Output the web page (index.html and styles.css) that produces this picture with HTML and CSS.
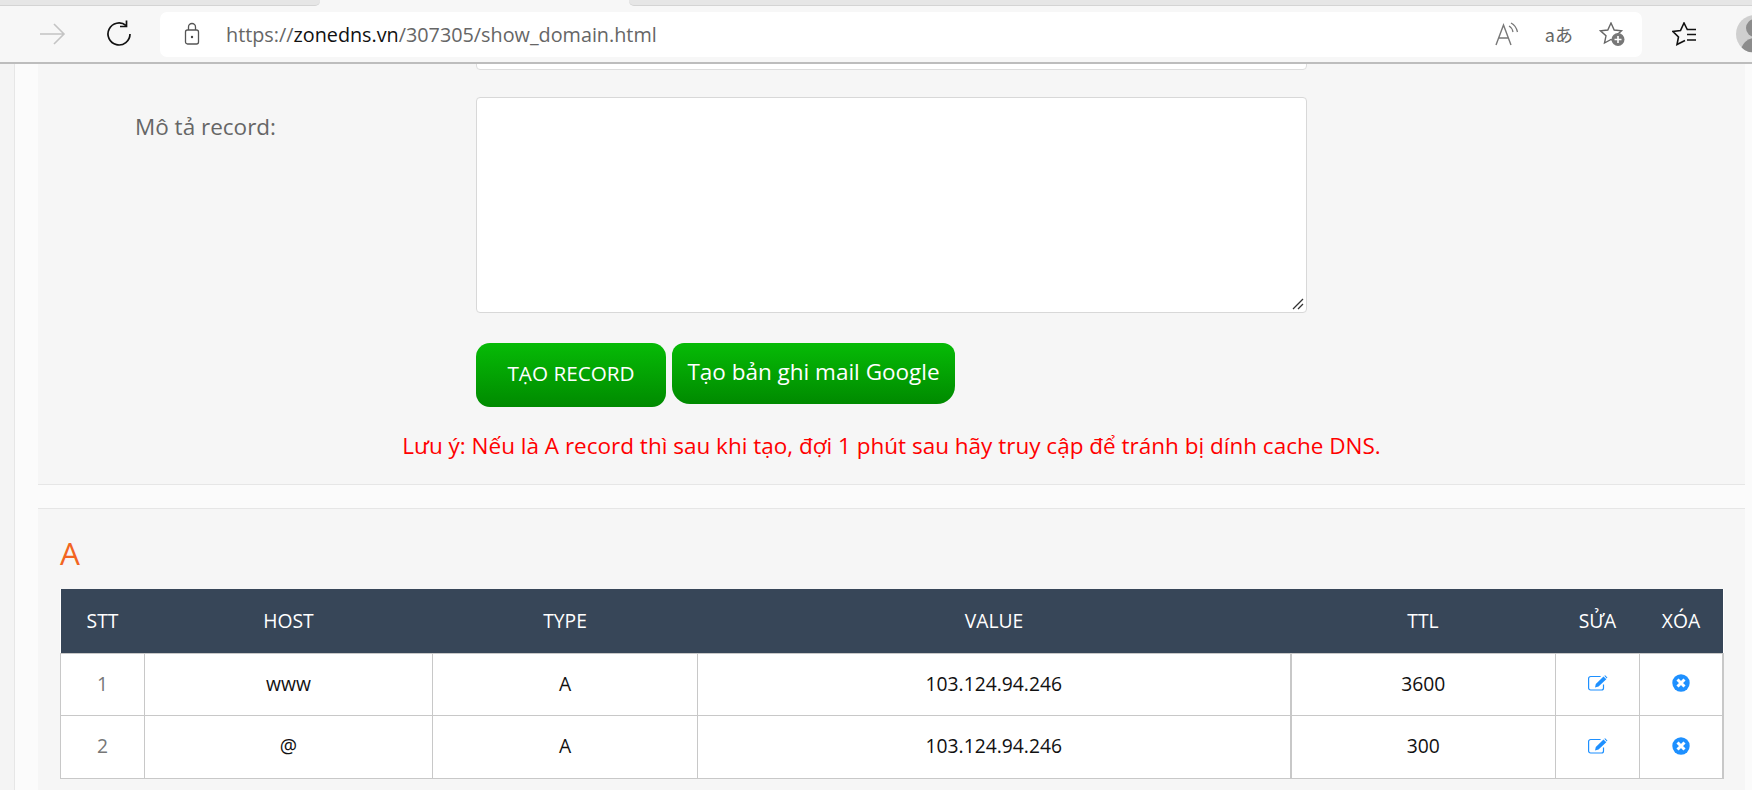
FILE: index.html
```html
<!DOCTYPE html>
<html lang="en">
<head>
    <meta charset="UTF-8">
    <meta name="viewport" content="width=device-width, initial-scale=1.0">
    <title>Show domain</title>
    <link rel="stylesheet" href="styles.css">
</head>
<body>
    <div class="tabstrip">
        <div class="tab-left"></div>
        <div class="tab-active"></div>
        <div class="tab-right"></div>
    </div>
    <header class="toolbar">
        <svg class="nav-icon forward" viewBox="0 0 28 28"><path d="M2 14h24M16 4l10 10-10 10" fill="none" stroke="#c4c4c4" stroke-width="1.6"/></svg>
        <svg class="nav-icon reload" viewBox="0 0 28 28"><path d="M21 5.500A11 11 0 1 0 25 14" fill="none" stroke="#111" stroke-width="1.7"/><path d="M21.500 .5v6h-6.500" fill="none" stroke="#111" stroke-width="1.7"/></svg>
        <div class="addressbar">
            <svg class="lock" viewBox="0 0 16 24"><path d="M4.500 8V5a3.500 3.500 0 0 1 7 0v3" fill="none" stroke="#555" stroke-width="1.3"/><rect x="1.500" y="8" width="13" height="14" rx="2" fill="none" stroke="#555" stroke-width="1.3"/><circle cx="8" cy="15" r="1.2" fill="#444"/></svg>
            <span class="url">https://<b>zonedns.vn</b>/307305/show_domain.html</span>
            <div class="addr-actions">
                <svg class="read-icon" viewBox="0 0 24 24"><path d="M1 23L8.500 3l7.500 20M3.800 16h9.500" fill="none" stroke="#777" stroke-width="1.4"/><path d="M14 4q3 1.500 4 6M16 1q5 2.500 6.500 9" fill="none" stroke="#777" stroke-width="1.3"/></svg>
                <span class="translate">aあ</span>
                <svg class="addr-icon" viewBox="0 0 26 24"><path d="M12 1l3.200 7 7.300 .8-5.500 5 1.500 7.200L12 17.500 5.500 21 7 13.800l-5.500-5 7.300-.8z" fill="none" stroke="#666" stroke-width="1.4"/><circle cx="19" cy="17.500" r="6.500" fill="#777"/><path d="M19 14v7M15.500 17.500h7" stroke="#fff" stroke-width="1.6"/></svg>
            </div>
        </div>
        <svg class="fav-icon" viewBox="0 0 26 24"><path d="M15.500 8L12 1 8.500 8.500 1 9.500 6.500 15 5 22.500l8-4" fill="none" stroke="#111" stroke-width="1.6"/><path d="M15 7.500h9M15 12.500h9M15 18h9" stroke="#111" stroke-width="1.500"/></svg>
        <div class="avatar"><div class="avatar-head"></div><div class="avatar-body"></div></div>
    </header>

    <div class="page">
        <main class="content">
            <section class="panel form-panel">
                <div class="form-row cut-row">
                    <div class="form-label"></div>
                    <input class="form-input" type="text">
                </div>
                <div class="form-row">
                    <label class="form-label">Mô tả record:</label>
                    <div class="area-wrap">
                        <textarea class="form-area"></textarea>
                        <svg class="area-grip" viewBox="0 0 12 12"><path d="M1 11L11 1M6 11l5-5" fill="none" stroke="#333" stroke-width="1.300"/></svg>
                    </div>
                </div>
                <div class="form-buttons">
                    <button class="btn btn-create">TẠO RECORD</button>
                    <button class="btn btn-google">Tạo bản ghi mail Google</button>
                </div>
                <p class="note">Lưu ý: Nếu là A record thì sau khi tạo, đợi 1 phút sau hãy truy cập để tránh bị dính cache DNS.</p>
            </section>

            <section class="panel table-panel">
                <h3 class="record-type">A</h3>
                <table class="records">
                    <colgroup>
                        <col class="c-stt"><col class="c-host"><col class="c-type"><col class="c-value"><col class="c-ttl"><col class="c-edit"><col class="c-del">
                    </colgroup>
                    <thead>
                        <tr>
                            <th>STT</th>
                            <th>HOST</th>
                            <th>TYPE</th>
                            <th>VALUE</th>
                            <th>TTL</th>
                            <th>SỬA</th>
                            <th>XÓA</th>
                        </tr>
                    </thead>
                    <tbody>
                        <tr>
                            <td class="num">1</td>
                            <td>www</td>
                            <td>A</td>
                            <td>103.124.94.246</td>
                            <td class="ttl">3600</td>
                            <td><svg class="row-icon" viewBox="0 0 20 16"><path d="M15.500 9.500v3.500a2 2 0 0 1-2 2H2.600a2 2 0 0 1-2-2V3.500a2 2 0 0 1 2-2h10" fill="none" stroke="#1e90ff" stroke-width="1.200"/><path d="M7 12.500l.8-3.500 7.700-7.500 2.800 2.800-7.800 7.200zM16.300 .8l.8-.5 2.300 2.300-.6 .8z" fill="#1e90ff"/></svg></td>
                            <td class="last"><svg class="row-icon del" viewBox="0 0 18 18"><circle cx="9" cy="9" r="8.700" fill="#1e90ff"/><path d="M5.500 5.500l7 7M12.500 5.500l-7 7" stroke="#fff" stroke-width="3"/></svg></td>
                        </tr>
                        <tr>
                            <td class="num">2</td>
                            <td>@</td>
                            <td>A</td>
                            <td>103.124.94.246</td>
                            <td class="ttl">300</td>
                            <td><svg class="row-icon" viewBox="0 0 20 16"><path d="M15.500 9.500v3.500a2 2 0 0 1-2 2H2.600a2 2 0 0 1-2-2V3.500a2 2 0 0 1 2-2h10" fill="none" stroke="#1e90ff" stroke-width="1.200"/><path d="M7 12.500l.8-3.500 7.700-7.500 2.800 2.800-7.800 7.200zM16.300 .8l.8-.5 2.300 2.300-.6 .8z" fill="#1e90ff"/></svg></td>
                            <td class="last"><svg class="row-icon del" viewBox="0 0 18 18"><circle cx="9" cy="9" r="8.700" fill="#1e90ff"/><path d="M5.500 5.500l7 7M12.500 5.500l-7 7" stroke="#fff" stroke-width="3"/></svg></td>
                        </tr>
                    </tbody>
                </table>
            </section>
        </main>
    </div>
</body>
</html>
```

FILE: styles.css
```css
* {
    box-sizing: border-box;
}

body {
    margin: 0;
    height: 790px;
    overflow: hidden;
    font-family: "Open Sans", sans-serif;
    background-color: #fbfbfb;
    color: #111;
}

/* browser chrome */
.tabstrip {
    display: flex;
    height: 6px;
    background: #f7f7f7;
}

.tab-left {
    width: 320px;
    background: #e6e6e6;
    border-bottom: 1px solid #d4d4d4;
    border-bottom-right-radius: 5px;
}

.tab-active {
    width: 309px;
}

.tab-right {
    flex: 1;
    background: #e6e6e6;
    border-bottom: 1px solid #d4d4d4;
    border-bottom-left-radius: 5px;
}

.toolbar {
    height: 58px;
    display: flex;
    align-items: center;
    background: #f7f7f7;
    border-bottom: 2px solid #bdbdbd;
    padding-left: 38px;
    overflow: hidden;
}

.nav-icon {
    width: 28px;
    height: 28px;
    flex-shrink: 0;
}

.forward {
    margin-right: 39px;
}

.reload {
    margin-right: 27px;
}

.addressbar {
    width: 1482px;
    height: 45px;
    flex-shrink: 0;
    background: #fff;
    border-radius: 7px;
    display: flex;
    align-items: center;
    padding-left: 24px;
}

.lock {
    width: 16px;
    height: 24px;
    margin-right: 26px;
}

.url {
    font-size: 19.800px;
    color: #666;
}

.url b {
    font-weight: 400;
    color: #111;
}

.addr-actions {
    margin-left: auto;
    display: flex;
    align-items: center;
    gap: 26px;
    padding-right: 17px;
}

.read-icon {
    width: 24px;
    height: 24px;
}

.addr-icon {
    width: 26px;
    height: 24px;
}

.translate {
    font-size: 18px;
    color: #666;
    font-family: "Noto Sans CJK JP", sans-serif;
}

.fav-icon {
    width: 26px;
    height: 24px;
    flex-shrink: 0;
    margin-left: 30px;
}

.avatar {
    width: 38px;
    height: 38px;
    margin-left: 38px;
    border-radius: 50%;
    background: #cfcfcf;
    overflow: hidden;
    flex-shrink: 0;
    display: flex;
    flex-direction: column;
    align-items: center;
}

.avatar-head {
    width: 18px;
    height: 18px;
    margin-top: 4px;
    border-radius: 50%;
    background: #8c8c8c;
}

.avatar-body {
    width: 28px;
    height: 14px;
    margin-top: 1px;
    border-radius: 14px 14px 0 0;
    background: #8c8c8c;
}

/* page */
.page {
    height: 726px;
    background: #f4f4f4;
    padding-left: 14px;
    overflow: hidden;
}

.content {
    height: 100%;
    padding: 0 7px 0 23px;
    background: #fbfbfb;
    border-left: 1px solid #e6e6e6;
}

.panel {
    background: #f6f6f6;
}

.form-panel {
    height: 421px;
    border-bottom: 1px solid #e6e6e6;
    overflow: hidden;
}

.table-panel {
    height: 320px;
    margin-top: 23px;
    border-top: 1px solid #e6e6e6;
    padding: 27px 22px 0 22px;
}

.form-row {
    display: flex;
    margin-left: 97px;
}

.cut-row {
    height: 6px;
    margin-bottom: 27px;
    align-items: flex-end;
}

.form-label {
    width: 341px;
    font-size: 22.500px;
    color: #666;
    padding-top: 14px;
    flex-shrink: 0;
}

.form-input {
    width: 831px;
    height: 40px;
    flex-shrink: 0;
    background: #fff;
    border: 1px solid #ddd;
    border-radius: 4px;
}

.area-wrap {
    position: relative;
    width: 831px;
    height: 216px;
}

.form-area {
    display: block;
    width: 100%;
    height: 100%;
    background: #fff;
    border: 1px solid #d8d8d8;
    border-radius: 4px;
    margin: 0;
    resize: none;
}

.area-grip {
    position: absolute;
    right: 3px;
    bottom: 3px;
    width: 12px;
    height: 12px;
}

.form-buttons {
    display: flex;
    align-items: flex-start;
    gap: 6px;
    margin-left: 438px;
    margin-top: 30px;
}

.btn {
    border: none;
    color: #fff;
    background: linear-gradient(#06bb06, #008a00);
    font-family: "Open Sans", sans-serif;
    cursor: pointer;
    padding: 0 0 4px;
}

.btn-create {
    width: 190px;
    height: 64px;
    border-radius: 14px;
    font-size: 20.700px;
}

.btn-google {
    width: 283px;
    height: 61px;
    border-radius: 12px 12px 18px 18px;
    font-size: 22.500px;
}

.note {
    margin: 24px 0 0 0;
    text-align: center;
    color: #f00;
    font-size: 22.500px;
    line-height: 30px;
}

.record-type {
    margin: 0;
    font-size: 31.500px;
    font-weight: 400;
    line-height: 34px;
    color: #f26522;
}

.records {
    width: 1662px;
    margin-top: 19px;
    border-collapse: collapse;
    table-layout: fixed;
    background: #fff;
}

.c-stt { width: 84px; }
.c-host { width: 288px; }
.c-type { width: 265px; }
.c-value { width: 593px; }
.c-ttl { width: 265px; }
.c-edit { width: 84px; }
.c-del { width: 83px; }

.records th {
    height: 64px;
    background: #374658;
    color: #fff;
    font-size: 19.300px;
    font-weight: 400;
    text-align: center;
    padding: 0;
}

.records td {
    height: 63px;
    border: 1px solid #c8c8c8;
    font-size: 19.300px;
    text-align: center;
    padding: 0 0 2px;
}

.records tbody tr:first-child td {
    height: 62px;
}

.records .num {
    color: #777;
}

.records .ttl {
    border-left: 2px solid #c8c8c8;
}

.records .last {
    border-right: 2px solid #c8c8c8;
}

.row-icon {
    width: 20px;
    height: 16px;
    display: block;
    margin: 0 auto;
}

.row-icon.del {
    width: 18px;
    height: 18px;
}
```
